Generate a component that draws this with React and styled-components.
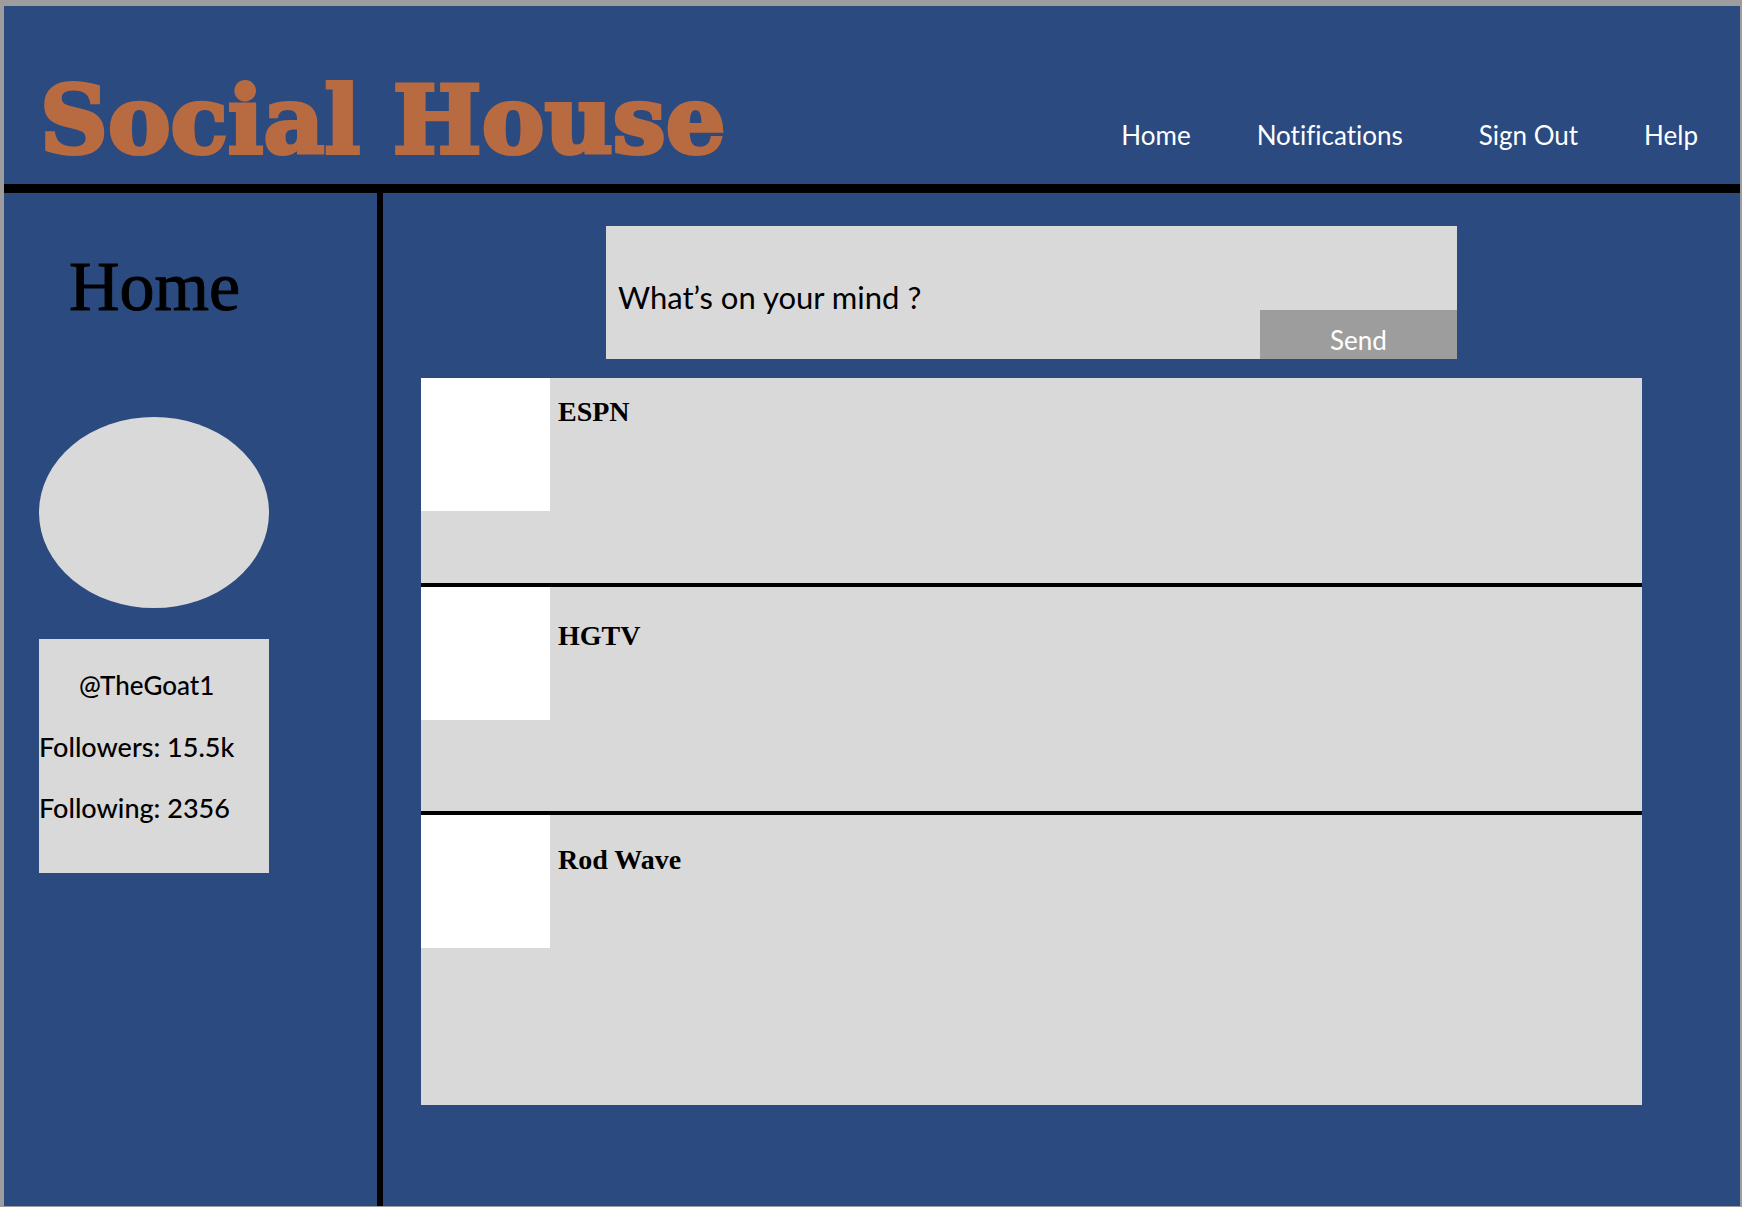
import React from "react";
import styled, { createGlobalStyle } from "styled-components";

const color = {
  frame: "#9d9d9d",
  blue: "#2b4a7f",
  orange: "#b86a40",
  panel: "#d9d9d9",
  line: "#000000",
  white: "#ffffff",
};

const sans = `Lato, "Open Sans", sans-serif`;
const serif = `"Liberation Serif", "Times New Roman", serif`;

const GlobalStyle = createGlobalStyle`
  *, *::before, *::after { box-sizing: border-box; }
  body {
    margin: 0;
    background: ${color.frame};
    color: #000;
    font-family: ${sans};
    font-variant-ligatures: none;
  }
  h1, h2, h3, p { margin: 0; padding: 0; }
`;

const Page = styled.div`
  display: flex;
  flex-direction: column;
  min-height: 100vh;
  padding: 6px 2px 1px 4px;
  background: ${color.frame};
`;

const Header = styled.header`
  display: flex;
  flex-wrap: wrap;
  align-items: flex-end;
  justify-content: space-between;
  padding: 64px 42px 14px 36px;
  background: ${color.blue};
  border-bottom: 9px solid ${color.line};
`;

const Brand = styled.h1`
  font-family: "DejaVu Serif", serif;
  font-size: 94px;
  line-height: 100px;
  font-weight: 700;
  color: ${color.orange};
  -webkit-text-stroke: 4px ${color.orange};
`;

const Nav = styled.nav`
  display: flex;
  gap: 66px;
  margin-bottom: 19px;
`;

const NavLink = styled.a`
  margin-left: ${({ $apart }) => ($apart ? "10px" : "0")};
  font-size: 26px;
  line-height: 32px;
  color: ${color.white};
  text-decoration: none;
`;

const Body = styled.div`
  display: flex;
  flex: 1;
  background: ${color.blue};
`;

const Sidebar = styled.aside`
  flex: 0 0 379px;
  padding: 54px 35px;
  border-right: 6px solid ${color.line};
`;

const PageTitle = styled.h2`
  padding-left: 30px;
  font-family: ${serif};
  font-size: 70px;
  line-height: 80px;
  font-weight: 400;
  -webkit-text-stroke: 1px #000;
`;

const ProfilePicture = styled.div`
  width: 230px;
  height: 191px;
  margin: 90px 0 31px;
  border-radius: 50%;
  background: ${color.panel};
`;

const ProfileCard = styled.section`
  width: 230px;
  padding: 16px 0 35px;
  background: ${color.panel};
`;

const ProfileLine = styled.p`
  font-size: 27px;
  line-height: 61px;
  font-weight: 500;
  white-space: nowrap;
`;

const Handle = styled(ProfileLine)`
  padding-left: 40px;
  font-size: 26px;
`;

const Main = styled.main`
  flex: 1;
  min-width: 0;
  padding: 33px 98px 40px 38px;
`;

const Composer = styled.form`
  display: flex;
  align-items: flex-end;
  margin: 0 185px 19px;
  background: ${color.panel};
`;

const ComposerInput = styled.input`
  flex: 1;
  min-width: 0;
  height: 133px;
  padding: 8px 12px 0;
  border: 0;
  background: transparent;
  font-family: ${sans};
  font-size: 31px;
  color: #000;
  &::placeholder { color: #000; opacity: 1; }
`;

const SendButton = styled.button`
  flex: 0 0 197px;
  height: 49px;
  padding: 10px 0 0;
  border: 0;
  background: ${color.frame};
  font-family: ${sans};
  font-size: 26px;
  line-height: 32px;
  color: ${color.white};
`;

const Feed = styled.section`
  background: ${color.panel};
`;

const Post = styled.article`
  display: flex;
  align-items: flex-start;
  gap: 8px;
  min-height: ${({ $height }) => $height}px;
  & + & { border-top: 4px solid ${color.line}; }
`;

const Avatar = styled.div`
  width: 129px;
  height: 133px;
  background: ${color.white};
`;

const Author = styled.h3`
  padding-top: ${({ $top }) => $top}px;
  font-family: ${serif};
  font-size: 28px;
  line-height: 32px;
  font-weight: 700;
`;

const links = [
  { label: "Home" },
  { label: "Notifications" },
  { label: "Sign Out", apart: true },
  { label: "Help" },
];

const posts = [
  { author: "ESPN", height: 205, top: 18 },
  { author: "HGTV", height: 228, top: 33 },
  { author: "Rod Wave", height: 294, top: 29 },
];

export default function App() {
  return (
    <Page>
      <GlobalStyle />
      <Header>
        <Brand>Social House</Brand>
        <Nav aria-label="Main">
          {links.map(({ label, apart }) => (
            <NavLink key={label} href="#" $apart={apart}>{label}</NavLink>
          ))}
        </Nav>
      </Header>
      <Body>
        <Sidebar>
          <PageTitle>Home</PageTitle>
          <ProfilePicture />
          <ProfileCard>
            <Handle>@TheGoat1</Handle>
            <ProfileLine>Followers: 15.5k</ProfileLine>
            <ProfileLine>Following: 2356</ProfileLine>
          </ProfileCard>
        </Sidebar>
        <Main>
          <Composer onSubmit={(event) => event.preventDefault()}>
            <ComposerInput
              type="text"
              aria-label="What’s on your mind ?"
              placeholder="What’s on your mind ?"
            />
            <SendButton type="submit">Send</SendButton>
          </Composer>
          <Feed>
            {posts.map(({ author, height, top }) => (
              <Post key={author} $height={height}>
                <Avatar />
                <Author $top={top}>{author}</Author>
              </Post>
            ))}
          </Feed>
        </Main>
      </Body>
    </Page>
  );
}
